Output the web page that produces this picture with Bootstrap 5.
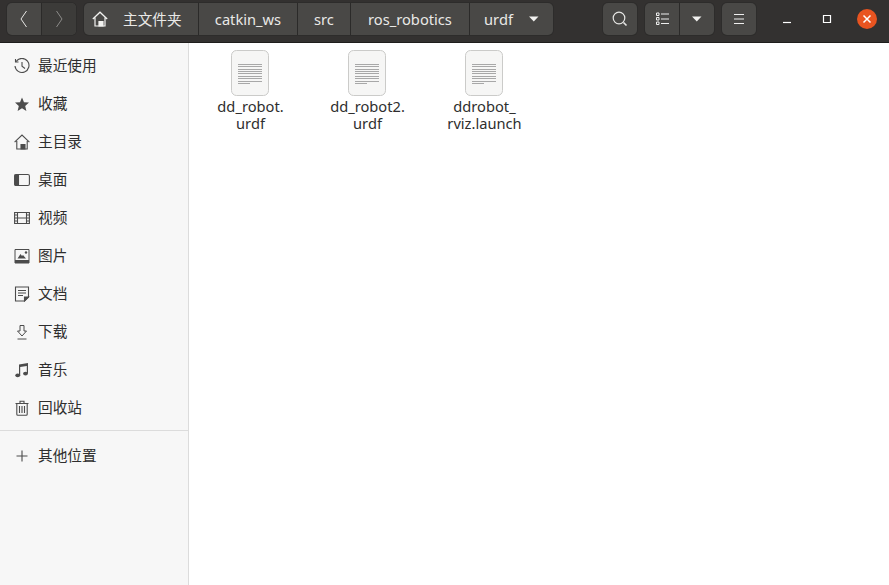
<!doctype html>
<html lang="zh"><head><meta charset="utf-8"><title>urdf</title>
<link rel="stylesheet" href="https://cdn.jsdelivr.net/npm/bootstrap@5.3.0/dist/css/bootstrap.min.css">
<style>
html,body{height:100%;margin:0;overflow:hidden}
body{font-family:"Noto Sans","Noto Sans CJK SC",sans-serif;font-size:14.67px;background:#fff}
.winbar{height:43px;background:#333130;border-bottom:1px solid #1e1d1c;padding:3px 0 0 7px;color:#eee;align-items:flex-start}
.grp{display:flex;height:32px;border-radius:5px;background:#494846;box-shadow:0 0 0 1px #2d2c2b;flex:none}
.tbtn{display:flex;align-items:center;justify-content:center;height:32px;width:34px;color:#eee;border-left:1px solid #2b2a29}
.tbtn:first-child{border-left:0}
.tbtn.off{background:#3c3b39;border-radius:0 5px 5px 0;width:35px}
.seg{display:flex;align-items:center;justify-content:center;height:32px;font-size:14.67px;border-left:1px solid #2b2a29;color:#e9e9e7}
.seg:first-child{border-left:0}
.seg-home{width:114px;justify-content:flex-start;padding-left:8px}
.seg-home span{margin-left:15px}
.main-wrap{height:542px}
.side{width:189px;flex:none;background:#f7f7f7;border-right:1px solid #dcdcdc;padding-top:4px}
.sitem{height:38px;display:flex;align-items:center;color:#2e2e2e;font-size:14.67px}
.sitem span{padding-bottom:2px}
.sico{width:16px;height:16px;margin:0 8px 0 14px;flex:none;color:#4c4c4c;display:block}
.sep{border-top:1px solid #dcdcdc;margin:3px 0 5px}
.files{padding:6px 0 0 3px;flex:1}
.fitem{width:117px;text-align:center;color:#2e2e2e;font-size:14.67px;line-height:17px}
.fitem svg{display:block;margin:0 auto 1px}
.wbtn{width:40px;height:32px;display:flex;align-items:center;justify-content:center;flex:none}
</style></head><body>
<div class="winbar d-flex">
  <div class="grp">
    <div class="tbtn"><svg width="16" height="18" viewBox="0 0 16 18" fill="none" stroke="#e6e6e4" stroke-width="1"><path d="M10.500 1 5 9l5.500 8"/></svg></div>
    <div class="tbtn off"><svg width="16" height="18" viewBox="0 0 16 18" fill="none" stroke="#8c8b89" stroke-width="1"><path d="M5.500 1 11 9l-5.500 8"/></svg></div>
  </div>
  <div class="grp ms-2">
    <div class="seg seg-home"><svg width="16" height="16" viewBox="0 0 16 16" fill="none" stroke="#f2f2f0" stroke-width="1.200"><path d="M.8 8 8 1.200 15.200 8M3 6.500V15h10V6.500"/><path d="M7 15V10.500h4V15z" fill="#f2f2f0"/></svg><span>主文件夹</span></div>
    <div class="seg" style="width:99px">catkin_ws</div>
    <div class="seg" style="width:53px">src</div>
    <div class="seg" style="width:119px">ros_robotics</div>
    <div class="seg" style="width:84px"><span>urdf</span><svg class="ms-3" width="10" height="6" viewBox="0 0 10 6" fill="#f2f2f0"><path d="M0 .5h9.500L4.800 5.500z"/></svg></div>
  </div>
  <div class="grp" style="margin-left:50px">
    <div class="tbtn"><svg width="16" height="16" viewBox="0 0 16 16" fill="none" stroke="#e6e6e4" stroke-width="1.200"><circle cx="7" cy="7" r="5.800"/><path d="m11.500 11.500 3 3" stroke-width="1.600"/></svg></div>
  </div>
  <div class="grp" style="margin-left:8px">
    <div class="tbtn"><svg width="13" height="14" viewBox="0 0 13 14" fill="none" stroke="#eee" stroke-width="1"><path d="M.5 1h2.500v2.500H.5zM.5 5.500h2.500V8H.5zM.5 10h2.500v2.500H.5zM5 2h8M5 7h8M5 11.500h8"/></svg></div>
    <div class="tbtn" style="width:35px"><svg width="10" height="6" viewBox="0 0 10 6" fill="#f2f2f0"><path d="M0 .5h9.500L4.800 5.500z"/></svg></div>
  </div>
  <div class="grp" style="margin-left:8px">
    <div class="tbtn"><svg width="12" height="12" viewBox="0 0 12 12" stroke="#eee" stroke-width="1"><path d="M1 1.500h10M1 6h10M1 10.500h10"/></svg></div>
  </div>
  <div class="d-flex" style="margin-left:11px">
    <div class="wbtn"><svg width="10" height="10" viewBox="0 0 10 10" stroke="#fff" stroke-width="1.200"><path d="M1 8.500h8"/></svg></div>
    <div class="wbtn"><svg width="10" height="10" viewBox="0 0 10 10" fill="none" stroke="#fff" stroke-width="1.200"><path d="M1.500 1.500h7v7h-7z"/></svg></div>
    <div class="wbtn"><svg width="20" height="20" viewBox="0 0 20 20"><circle cx="10" cy="10" r="10" fill="#e95420"/><path d="M6.500 6.500l7 7M13.500 6.500l-7 7" stroke="#fff" stroke-width="1.500"/></svg></div>
  </div>
</div>
<div class="main-wrap d-flex">
  <nav class="side">
    <div class="sitem"><svg class="sico" viewBox="0 0 16 16" fill="none" stroke="currentColor" stroke-width="1.100"><path d="M2.300 3.300A7 7 0 1 1 1 8M1.500 1v3h3M8 4v4.300l3 2.200"/></svg><span>最近使用</span></div>
    <div class="sitem"><svg class="sico" viewBox="0 0 16 16" fill="currentColor"><path d="m8 1.500 2 4.700 5 .4-3.800 3.300 1.200 5L8 12.200l-4.400 2.700 1.200-5L1 6.600l5-.4z"/></svg><span>收藏</span></div>
    <div class="sitem"><svg class="sico" viewBox="0 0 16 16" fill="none" stroke="currentColor" stroke-width="1.100"><path d="M.6 8.200 8 1l7.400 7.200M2.800 7v8h10.400V7"/><path d="M7 15v-4.500h4V15z" fill="currentColor"/></svg><span>主目录</span></div>
    <div class="sitem"><svg class="sico" viewBox="0 0 16 16" fill="none" stroke="currentColor" stroke-width="1.100"><rect x=".6" y="2.500" width="14.800" height="11" rx="1.500"/><path d="M1 3h3.500v10H1z" fill="currentColor"/></svg><span>桌面</span></div>
    <div class="sitem"><svg class="sico" viewBox="0 0 16 16" fill="none" stroke="currentColor" stroke-width="1.100"><path d="M.6 2.500h14.800v11H.6zM3.500 2.500v11M12.500 2.500v11M3.500 8h9M.6 5h3M.6 8h3M.6 11h3M12.500 5h3M12.500 8h3M12.500 11h3"/></svg><span>视频</span></div>
    <div class="sitem"><svg class="sico" viewBox="0 0 16 16"><path d="M1 1.500h14v13.500H1z" fill="none" stroke="currentColor" stroke-width="1"/><path d="M1 12h14v3H1zM3.500 10.500 6.500 6l1.500 2 1-1 3 3.500z" fill="currentColor"/><circle cx="12" cy="4.500" r="1.200" fill="currentColor"/></svg><span>图片</span></div>
    <div class="sitem"><svg class="sico" viewBox="0 0 16 16" fill="none" stroke="currentColor" stroke-width="1.100"><path d="M1.500 1h13v10l-4 4h-9zM4 4.500h8M4 7h8M4 9.500h5"/><path d="M14.500 11h-4v4z" fill="currentColor"/></svg><span>文档</span></div>
    <div class="sitem"><svg class="sico" viewBox="0 0 16 16" fill="none" stroke="currentColor" stroke-width="1"><path d="M6 1.500h4V7h2.500L8 12 3.500 7H6zM3.500 15h9"/></svg><span>下载</span></div>
    <div class="sitem"><svg class="sico" viewBox="0 0 16 16" fill="currentColor"><path d="M5 2.500 14 1v10.500h-1.200V4L6.200 5v8.500H5z"/><ellipse cx="3.700" cy="13.300" rx="2.400" ry="1.900"/><ellipse cx="11.500" cy="11.600" rx="2.400" ry="1.900"/></svg><span>音乐</span></div>
    <div class="sitem"><svg class="sico" viewBox="0 0 16 16" fill="none" stroke="currentColor" stroke-width="1.100"><path d="M1.500 3.500h13M6 3.500V1.200h4v2.300M2.800 3.500v10.700c0 .6.400 1 1 1h8.400c.6 0 1-.4 1-1V3.500M5.500 6v7M8 6v7M10.500 6v7"/></svg><span>回收站</span></div>
    <div class="sep"></div>
    <div class="sitem" style="height:40px"><svg class="sico" viewBox="0 0 16 16" stroke="currentColor" stroke-width="1.100"><path d="M8 2.500v11M2.500 8h11"/></svg><span>其他位置</span></div>
  </nav>
  <main class="files d-flex align-items-start">
    <div class="fitem"><svg width="40" height="48" viewBox="0 0 40 48"><rect x=".5" y="1.500" width="37" height="45" rx="5" fill="#f6f6f5" stroke="#cbcbc9"/><path d="M7 15.500h24M7 17.500h24M7 20.500h24M7 22.500h24M7 24.500h24M7 27.500h24M7 29.500h24M7 32.500h24M7 34.500h12" stroke="#a8a8a8"/></svg>dd_robot.<br>urdf</div>
    <div class="fitem"><svg width="40" height="48" viewBox="0 0 40 48"><rect x=".5" y="1.500" width="37" height="45" rx="5" fill="#f6f6f5" stroke="#cbcbc9"/><path d="M7 15.500h24M7 17.500h24M7 20.500h24M7 22.500h24M7 24.500h24M7 27.500h24M7 29.500h24M7 32.500h24M7 34.500h12" stroke="#a8a8a8"/></svg>dd_robot2.<br>urdf</div>
    <div class="fitem"><svg width="40" height="48" viewBox="0 0 40 48"><rect x=".5" y="1.500" width="37" height="45" rx="5" fill="#f6f6f5" stroke="#cbcbc9"/><path d="M7 15.500h24M7 17.500h24M7 20.500h24M7 22.500h24M7 24.500h24M7 27.500h24M7 29.500h24M7 32.500h24M7 34.500h12" stroke="#a8a8a8"/></svg>ddrobot_<br>rviz.launch</div>
  </main>
</div>
<script src="https://cdn.jsdelivr.net/npm/bootstrap@5.3.0/dist/js/bootstrap.bundle.min.js"></script>
</body></html>
